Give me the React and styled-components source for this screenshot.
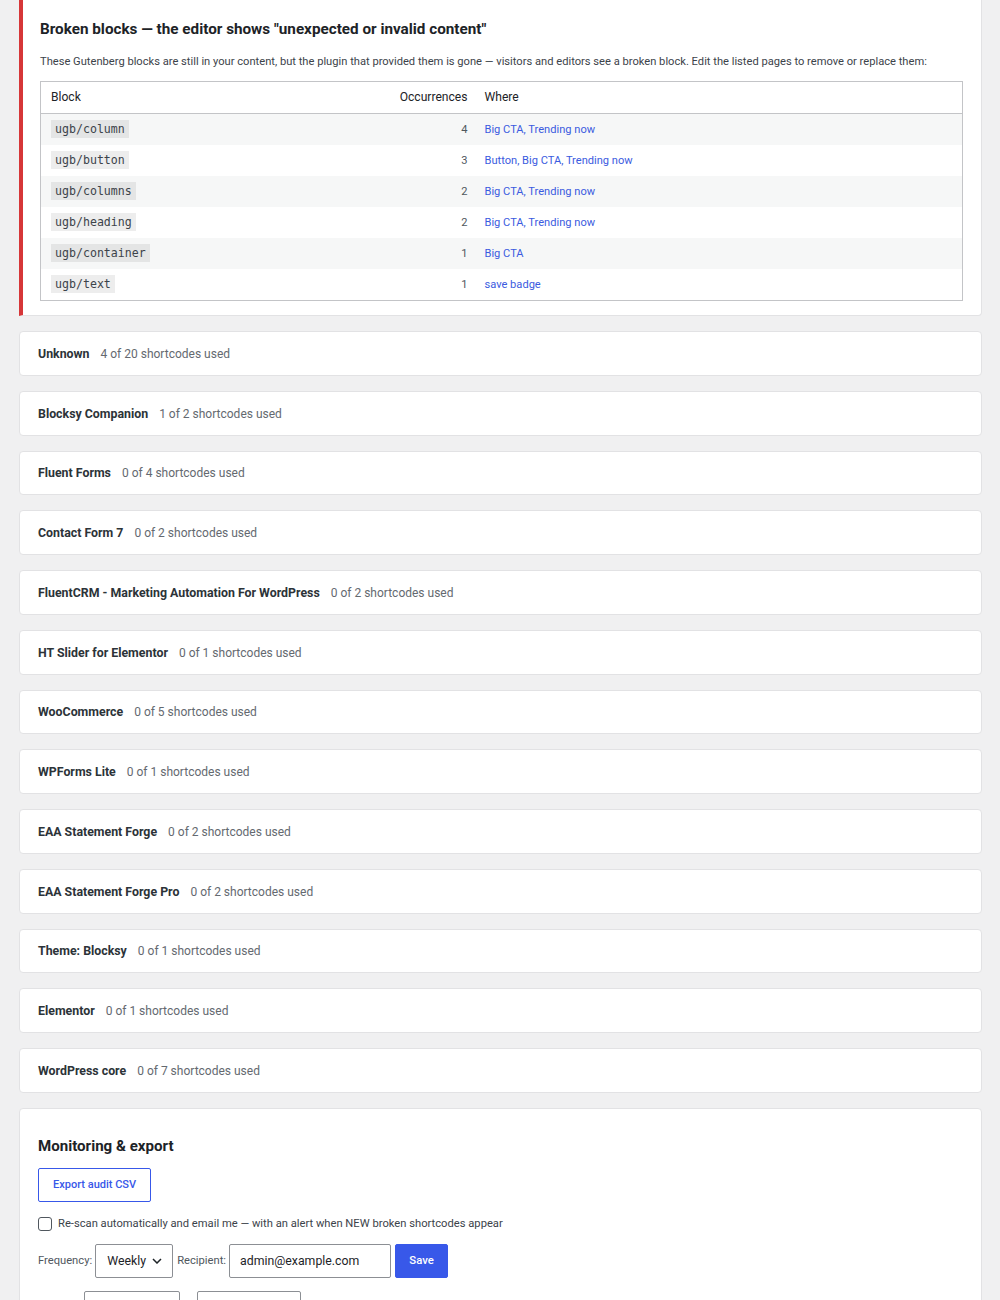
import React from "react";
import styled, { createGlobalStyle } from "styled-components";

const Global = createGlobalStyle`
  html, body { margin: 0; padding: 0; background: #f0f0f1; }
  body {
    font-family: Roboto, "Noto Sans", "Liberation Sans", sans-serif;
    color: #3c434a;
    font-size: 12px;
    overflow: hidden;
  }
  * { box-sizing: border-box; }
`;

const Page = styled.div`
  padding: 0 18px 40px 19px;
  display: flex;
  flex-direction: column;
  gap: 15px;
`;

const Card = styled.section`
  background: #fff;
  border: 1px solid #e2e2e4;
  border-radius: 4px;
  ${(p) => p.$alert && `
    border-left: 4px solid #d63638;
    border-radius: 0 4px 4px 0;
    margin-top: -12px;
    padding: 29px 18px 14px 17px;
  `}
`;

const AlertTitle = styled.h2`
  margin: 0;
  font-size: 15.25px;
  line-height: 22px;
  font-weight: 700;
  color: #1d2327;
`;

const Desc = styled.p`
  margin: 13px 0 10px;
  font-size: 11.15px;
  line-height: 18px;
  color: #3c434a;
`;

const Table = styled.table`
  width: 100%;
  border-collapse: collapse;
  border: 1px solid #c3c4c7;
  font-size: 11.1px;
`;

const Th = styled.th`
  text-align: ${(p) => p.$align || "left"};
  font-weight: 400;
  color: #1d2327;
  font-size: 12.1px;
  line-height: 16px;
  padding: 7px ${(p) => (p.$align === "right" ? "9px" : "10px")} 8px ${(p) => (p.$tight ? "8px" : "10px")};
  border-bottom: 1px solid #c3c4c7;
  width: ${(p) => p.$w || "auto"};
`;

const Tr = styled.tr`
  background: ${(p) => (p.$odd ? "#f6f7f7" : "#fff")};
`;

const Td = styled.td`
  text-align: ${(p) => p.$align || "left"};
  padding: 6px ${(p) => (p.$align === "right" ? "9px" : "10px")} 6px ${(p) => (p.$tight ? "8px" : "10px")};
  line-height: 19px;
  color: #50575e;
`;

const Code = styled.code`
  font-family: "DejaVu Sans Mono", monospace;
  font-size: 11.6px;
  background: rgba(0, 0, 0, 0.07);
  padding: 2px 4px;
  color: #3c434a;
`;

const Link = styled.a`
  color: #3b5be0;
  text-decoration: none;
`;

const GroupCard = styled(Card)`
  display: flex;
  align-items: center;
  gap: 11px;
  height: 44.75px;
  padding: 1px 18px 0;
`;

const GroupName = styled.strong`
  font-weight: 700;
  color: #2c3338;
  font-size: 12.35px;
`;

const GroupCount = styled.span`
  color: #646970;
  font-size: 12px;
`;

const Monitor = styled(Card)`
  padding: 26px 18px 20px;
  display: flex;
  flex-direction: column;
  align-items: flex-start;
`;

const MonitorTitle = styled.h2`
  margin: 0 0 11px;
  font-size: 15.1px;
  line-height: 22px;
  font-weight: 700;
  color: #1d2327;
`;

const OutlineButton = styled.button`
  font-family: inherit;
  font-size: 11px;
  font-weight: 500;
  color: #3858e9;
  background: #fff;
  border: 1px solid #3858e9;
  border-radius: 2px;
  height: 34px;
  padding: 0 14px;
`;

const CheckRow = styled.label`
  display: flex;
  align-items: center;
  gap: 6px;
  margin-top: 15px;
  font-size: 11.2px;
  color: #3c434a;
`;

const Box = styled.span`
  width: 14px;
  height: 14px;
  border: 1px solid #50575e;
  border-radius: 3px;
  background: #fff;
`;

const FormRow = styled.div`
  display: flex;
  align-items: center;
  gap: ${(p) => p.$gap || "4px"};
  margin-top: ${(p) => p.$mt || "13px"};
`;

const FieldLabel = styled.span`
  font-size: 11.2px;
  color: #50575e;
  width: ${(p) => p.$w || "auto"};
`;

const Select = styled.div`
  width: 78px;
  height: 34px;
  border: 1px solid #8c8f94;
  border-radius: 2px;
  display: flex;
  align-items: center;
  justify-content: space-between;
  padding: 0 10px 0 11px;
  font-size: 12.3px;
  color: #1d2327;
`;

const Input = styled.div`
  width: ${(p) => p.$w || "162px"};
  height: 34px;
  border: 1px solid #8c8f94;
  border-radius: 2px;
  display: flex;
  align-items: center;
  padding: 0 10px;
  font-size: 12.3px;
  color: #1d2327;
`;

const PrimaryButton = styled.button`
  font-family: inherit;
  height: 34px;
  width: 53px;
  padding: 0;
  margin-left: 1px;
  background: #3858e9;
  color: #fff;
  border: 1px solid #3858e9;
  border-radius: 2px;
  font-size: 11.3px;
  font-weight: 500;
`;

const blocks = [
  ["ugb/column", 4, ["Big CTA", "Trending now"]],
  ["ugb/button", 3, ["Button", "Big CTA", "Trending now"]],
  ["ugb/columns", 2, ["Big CTA", "Trending now"]],
  ["ugb/heading", 2, ["Big CTA", "Trending now"]],
  ["ugb/container", 1, ["Big CTA"]],
  ["ugb/text", 1, ["save badge"]],
];

const groups = [
  ["Unknown", "4 of 20 shortcodes used"],
  ["Blocksy Companion", "1 of 2 shortcodes used"],
  ["Fluent Forms", "0 of 4 shortcodes used"],
  ["Contact Form 7", "0 of 2 shortcodes used"],
  ["FluentCRM - Marketing Automation For WordPress", "0 of 2 shortcodes used"],
  ["HT Slider for Elementor", "0 of 1 shortcodes used"],
  ["WooCommerce", "0 of 5 shortcodes used"],
  ["WPForms Lite", "0 of 1 shortcodes used"],
  ["EAA Statement Forge", "0 of 2 shortcodes used"],
  ["EAA Statement Forge Pro", "0 of 2 shortcodes used"],
  ["Theme: Blocksy", "0 of 1 shortcodes used"],
  ["Elementor", "0 of 1 shortcodes used"],
  ["WordPress core", "0 of 7 shortcodes used"],
];

export default function App() {
  return (
    <>
      <Global />
      <Page>
        <Card $alert>
          <AlertTitle>Broken blocks — the editor shows "unexpected or invalid content"</AlertTitle>
          <Desc>
            These Gutenberg blocks are still in your content, but the plugin that provided them is gone — visitors and editors see a broken block. Edit the listed pages to remove or replace them:
          </Desc>
          <Table>
            <thead>
              <tr>
                <Th>Block</Th>
                <Th $align="right" $w="100px">Occurrences</Th>
                <Th $tight $w="486px">Where</Th>
              </tr>
            </thead>
            <tbody>
              {blocks.map(([name, n, where], i) => (
                <Tr key={name} $odd={i % 2 === 0}>
                  <Td><Code>{name}</Code></Td>
                  <Td $align="right">{n}</Td>
                  <Td $tight>
                    {where.map((w, j) => (
                      <React.Fragment key={w}>
                        {j > 0 && <Link as="span">, </Link>}
                        <Link href="#">{w}</Link>
                      </React.Fragment>
                    ))}
                  </Td>
                </Tr>
              ))}
            </tbody>
          </Table>
        </Card>

        {groups.map(([name, count]) => (
          <GroupCard key={name}>
            <GroupName>{name}</GroupName>
            <GroupCount>{count}</GroupCount>
          </GroupCard>
        ))}

        <Monitor>
          <MonitorTitle>Monitoring &amp; export</MonitorTitle>
          <OutlineButton>Export audit CSV</OutlineButton>
          <CheckRow>
            <Box />
            Re-scan automatically and email me — with an alert when NEW broken shortcodes appear
          </CheckRow>
          <FormRow $gap="3px">
            <FieldLabel>Frequency:</FieldLabel>
            <Select>
              <span>Weekly</span>
              <svg width="10" height="6" viewBox="0 0 10 6" fill="none">
                <path d="M1 1l4 4 4-4" stroke="#1d2327" strokeWidth="1.5" />
              </svg>
            </Select>
            <FieldLabel style={{ marginLeft: 1 }}>Recipient:</FieldLabel>
            <Input>admin@example.com</Input>
            <PrimaryButton>Save</PrimaryButton>
          </FormRow>
          <FormRow>
            <FieldLabel $w="42px">Day:</FieldLabel>
            <Input $w="96px">Monday</Input>
            <FieldLabel $w="9px">at</FieldLabel>
            <Input $w="104px">09:00</Input>
          </FormRow>
        </Monitor>
      </Page>
    </>
  );
}
